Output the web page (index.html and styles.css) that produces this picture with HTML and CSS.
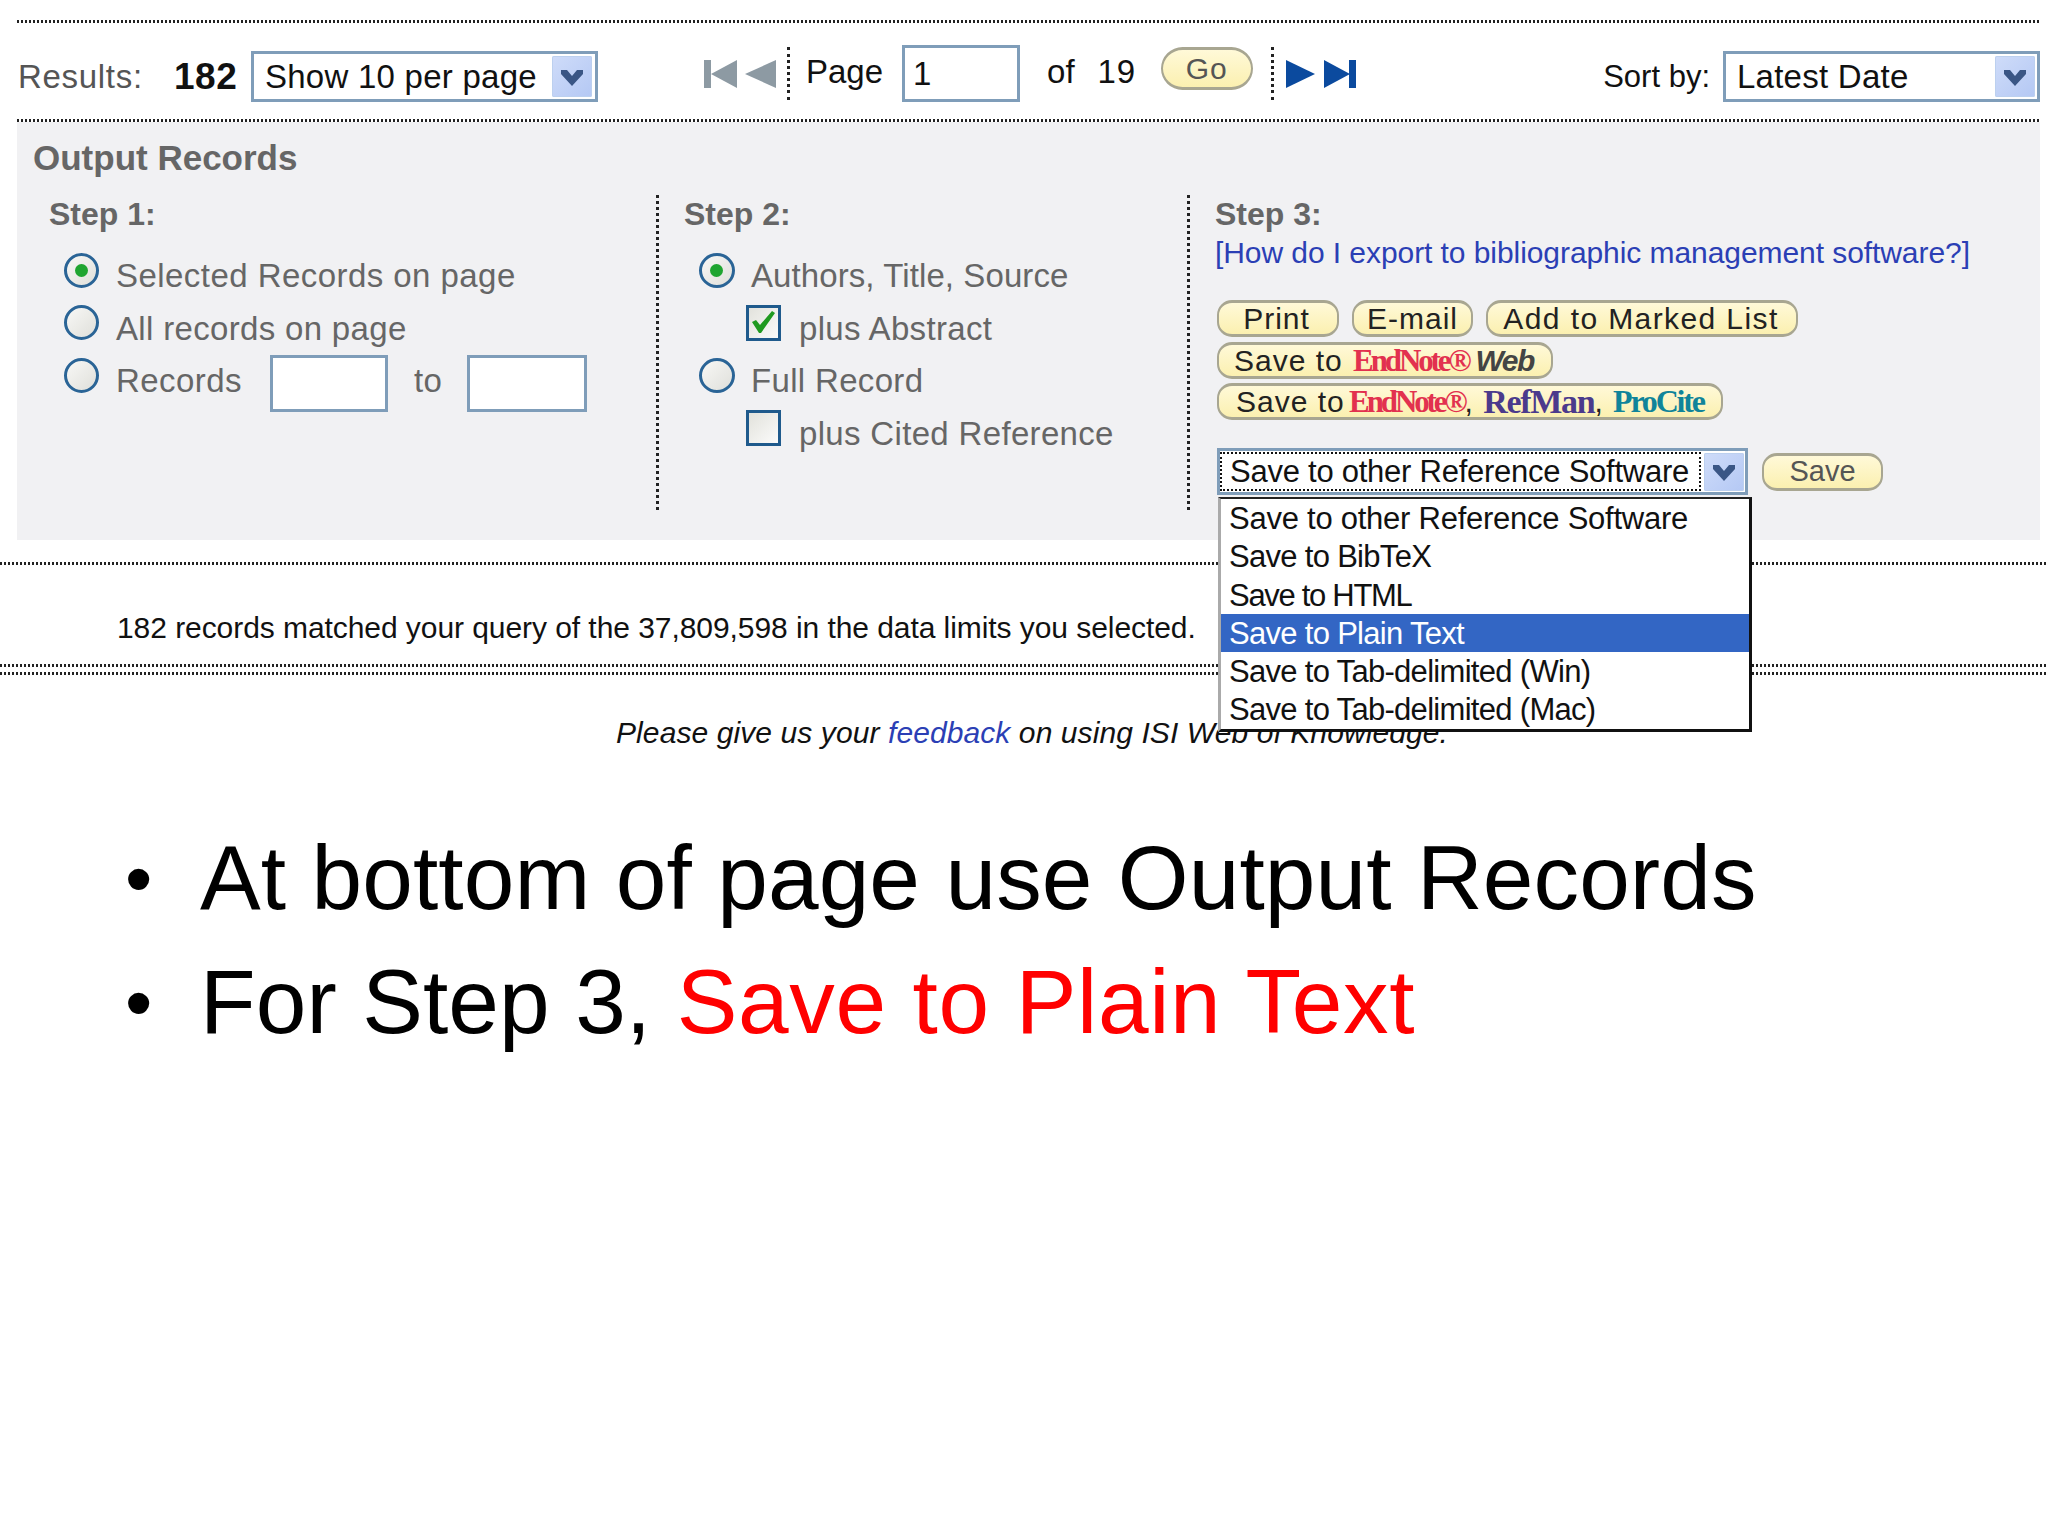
FILE: index.html
```html
<!DOCTYPE html>
<html>
<head>
  <title>Output Records</title>
  <link rel="stylesheet" href="styles.css">
</head>
<body>

  <div class="rule rule-top"></div>

  <div class="toolbar">
    <div class="results">
      <span class="results-label">Results:</span>
      <b class="results-count">182</b>
      <div class="select select-show">
        <span class="select-text">Show 10 per page</span>
        <span class="select-arrow"><svg viewBox="0 0 40 41"><path d="M9 14h6l5 6 5-6h6v4L20 30 9 18z" fill="#3a5685"/></svg></span>
      </div>
    </div>

    <div class="pager">
      <svg class="nav nav-first" viewBox="0 0 33 28"><path d="M0 0h7v28H0zM7 14L33 0v28z" fill="#8d9aa3"/></svg>
      <svg class="nav nav-prev" viewBox="0 0 31 28"><path d="M0 14L31 0v28z" fill="#8d9aa3"/></svg>
      <span class="vdots vdots-left"></span>
      <span class="pager-text page-word">Page</span>
      <input class="box box-page" type="text" value="1">
      <span class="pager-text of-word">of</span>
      <span class="pager-text of-count">19</span>
      <span class="pill pill-go">Go</span>
      <span class="vdots vdots-right"></span>
      <svg class="nav nav-next" viewBox="0 0 29 28"><path d="M0 0l29 14L0 28z" fill="#0b4a9e"/></svg>
      <svg class="nav nav-last" viewBox="0 0 32 28"><path d="M0 0l26 14L0 28zM25 0h7v28h-7z" fill="#0b4a9e"/></svg>
    </div>

    <div class="sort">
      <span class="sort-label">Sort by:</span>
      <div class="select select-sort">
        <span class="select-text">Latest Date</span>
        <span class="select-arrow"><svg viewBox="0 0 40 41"><path d="M9 14h6l5 6 5-6h6v4L20 30 9 18z" fill="#3a5685"/></svg></span>
      </div>
    </div>
  </div>

  <div class="rule rule-panel"></div>

  <div class="panel">
    <h2 class="panel-title">Output Records</h2>
    <div class="steps">

      <div class="step step-one">
        <h3 class="step-title">Step 1:</h3>
        <div class="opt opt-first"><span class="radio radio-on"></span><span class="opt-text opt-wide">Selected Records on page</span></div>
        <div class="opt"><span class="radio"></span><span class="opt-text">All records on page</span></div>
        <div class="opt">
          <span class="radio"></span><span class="opt-text opt-wide">Records</span>
          <input class="box box-from" type="text">
          <span class="opt-text to-word">to</span>
          <input class="box box-to" type="text">
        </div>
      </div>

      <div class="step step-two">
        <h3 class="step-title">Step 2:</h3>
        <div class="opt opt-first"><span class="radio radio-on"></span><span class="opt-text opt-narrow">Authors, Title, Source</span></div>
        <div class="opt opt-sub">
          <span class="check"><svg viewBox="0 0 29 29"><path d="M3 14l4-2 4 5L23 3l3 2-14 20h-2z" fill="#1f9a1f"/></svg></span>
          <span class="opt-text">plus Abstract</span>
        </div>
        <div class="opt"><span class="radio"></span><span class="opt-text">Full Record</span></div>
        <div class="opt opt-sub"><span class="check"></span><span class="opt-text">plus Cited Reference</span></div>
      </div>

      <div class="step step-three">
        <h3 class="step-title">Step 3:</h3>
        <a class="help-link">[How do I export to bibliographic management software?]</a>

        <div class="pill-row pill-row-first">
          <span class="pill pill-print">Print</span>
          <span class="pill pill-email">E-mail</span>
          <span class="pill pill-marked">Add to Marked List</span>
        </div>
        <div class="pill-row">
          <span class="pill pill-web">Save to <span class="logo-endnote logo-endnote-web">EndNote®</span><span class="logo-web">Web</span></span>
        </div>
        <div class="pill-row">
          <span class="pill pill-soft">Save to <span class="logo-endnote">EndNote®</span>, <span class="logo-refman">RefMan</span>, <span class="logo-procite">ProCite</span></span>
        </div>

        <div class="save-row">
          <div class="select select-save">
            <span class="select-text select-focus">Save to other Reference Software</span>
            <span class="select-arrow"><svg viewBox="0 0 40 38"><path d="M9 12h6l5 6 5-6h6v4L20 28 9 16z" fill="#3a5685"/></svg></span>
          </div>
          <span class="pill pill-save">Save</span>

          <ul class="dropdown">
            <li>Save to other Reference Software</li>
            <li class="tight">Save to BibTeX</li>
            <li class="tighter">Save to HTML</li>
            <li class="tight active">Save to Plain Text</li>
            <li class="tight">Save to Tab-delimited (Win)</li>
            <li class="tight">Save to Tab-delimited (Mac)</li>
          </ul>
        </div>
      </div>

    </div>
  </div>

  <div class="rule rule-full rule-status"></div>
  <p class="status">182 records matched your query of the 37,809,598 in the data limits you selected.</p>
  <div class="rule rule-full rule-double"></div>
  <div class="rule rule-full rule-double-low"></div>
  <p class="feedback">Please give us your <a class="feedback-link">feedback</a> on using ISI Web of Knowledge.</p>

  <ul class="bullets">
    <li><span class="dot">•</span><span>At bottom of page use Output Records</span></li>
    <li><span class="dot">•</span><span>For Step 3, <span class="red">Save to Plain Text</span></span></li>
  </ul>

</body>
</html>
```

FILE: styles.css
```css
body {
  margin: 0;
  background-color: #fff;
  color: #111;
  font-family: "Liberation Sans", Arial, sans-serif;
  font-size: 33px;
  line-height: 40px;
}

h2, h3, p, ul {
  margin: 0;
  padding: 0;
}

/* dotted lines */
.rule {
  height: 3px;
  background-image: repeating-linear-gradient(90deg, #222 0 2px, transparent 2px 4px);
}

.rule-top {
  margin: 20px 8px 0 17px;
}

.rule-panel {
  margin: 0 8px 0 17px;
}

.rule-status {
  margin-top: 22px;
}

.rule-double {
  margin-top: 18px;
}

.rule-double-low {
  margin-top: 5px;
}

.vdots {
  width: 0;
  height: 53px;
  border-left: 3px dotted #222;
}

/* top bar */
.toolbar {
  display: flex;
  height: 96px;
  margin: 0 8px 0 18px;
}

.results, .sort {
  display: flex;
  align-items: center;
  height: 51px;
  margin-top: 28px;
}

.results-label {
  width: 125px;
  color: #555;
  letter-spacing: 0.7px;
}

.results-count {
  width: 62px;
  margin-left: 31px;
  font-size: 37px;
  letter-spacing: 0.5px;
}

.select {
  display: flex;
  align-items: center;
  box-sizing: border-box;
  height: 51px;
  border: 3px solid #7f9db9;
  background-color: #fff;
}

.select-show {
  width: 347px;
  margin-left: 15px;
  padding: 0 3px 0 11px;
}

.select-sort {
  width: 317px;
  margin-left: 13px;
  padding: 0 2px 0 11px;
}

.select-text {
  flex: 1;
  letter-spacing: 0.25px;
}

.select-arrow {
  width: 40px;
  height: 41px;
  border-radius: 2px;
  background: linear-gradient(135deg, #cfdcf9, #b4c8f4);
  box-shadow: inset 0 0 0 1px #bcd0ef;
}

.select-arrow svg {
  display: block;
  width: 100%;
  height: 100%;
}

.pager {
  display: flex;
  align-items: center;
  height: 57px;
  margin: 22px 0 0 106px;
}

.nav {
  height: 28px;
}

.nav-first {
  width: 33px;
}

.nav-prev {
  width: 31px;
  margin-left: 8px;
}

.vdots-left {
  margin-left: 11px;
}

.pager-text {
  margin-top: -4px;
}

.page-word {
  margin-left: 16px;
}

.box {
  box-sizing: border-box;
  height: 57px;
  padding: 0 8px;
  border: 3px solid #7f9db9;
  border-radius: 0;
  background-color: #fff;
  color: #111;
  font-family: "Liberation Sans", Arial, sans-serif;
  font-size: 33px;
  outline: none;
}

.box-page {
  width: 118px;
  margin-left: 19px;
}

.of-word {
  margin-left: 27px;
}

.of-count {
  margin-left: 23px;
  letter-spacing: 0.7px;
}

.pill {
  display: inline-flex;
  align-items: center;
  justify-content: center;
  box-sizing: border-box;
  height: 37px;
  border: 2px solid #a8a691;
  border-top-width: 3px;
  border-bottom-width: 3px;
  border-radius: 15px;
  background: linear-gradient(180deg, #fff9d8, #fbf0b0);
  color: #222;
  font-size: 30px;
  line-height: 31px;
  letter-spacing: 1px;
  white-space: pre;
}

.pill-go {
  width: 92px;
  height: 43px;
  margin: -10px 0 0 25px;
  border-radius: 22px;
  color: #555;
}

.vdots-right {
  margin-left: 18px;
}

.nav-next {
  width: 29px;
  margin-left: 12px;
}

.nav-last {
  width: 32px;
  margin-left: 9px;
}

.sort {
  margin-left: auto;
}

.sort-label {
  font-size: 31px;
  letter-spacing: 0;
}

/* grey panel */
.panel {
  box-sizing: border-box;
  height: 418px;
  margin: 0 8px 0 17px;
  padding: 16px 0 0 16px;
  background-color: #f1f1f3;
  color: #666;
}

.panel-title {
  font-size: 35px;
  font-weight: bold;
  line-height: 40px;
}

.steps {
  display: flex;
  height: 315px;
  margin-top: 17px;
}

.step {
  box-sizing: border-box;
  height: 315px;
}

.step-one {
  width: 623px;
  padding-left: 16px;
}

.step-two {
  width: 531px;
  padding-left: 25px;
  border-left: 3px dotted #222;
}

.step-three {
  flex: 1;
  padding-left: 25px;
  border-left: 3px dotted #222;
}

.step-title {
  margin-top: -1px;
  font-size: 32px;
  font-weight: bold;
  line-height: 40px;
}

.opt {
  display: flex;
  align-items: center;
  height: 52.6px;
  margin-left: 15px;
}

.opt-first {
  margin-top: 16px;
}

.opt-text {
  letter-spacing: 0.33px;
  white-space: nowrap;
}

.opt-wide {
  letter-spacing: 0.45px;
}

.opt-narrow {
  letter-spacing: 0.09px;
}

.radio {
  position: relative;
  box-sizing: border-box;
  flex: none;
  width: 35px;
  height: 35px;
  margin: -12px 17px 0 0;
  border: 3px solid #2a6496;
  border-radius: 50%;
  background: linear-gradient(135deg, #f8f8f6, #dfdfda);
}

.radio-on::after {
  content: "";
  position: absolute;
  top: 8px;
  left: 8px;
  width: 13px;
  height: 13px;
  border-radius: 50%;
  background-color: #1fa52f;
}

.step-two .opt {
  margin-left: 15px;
}

.step-two .radio {
  width: 36px;
  margin-right: 16px;
}

.step-two .opt-sub {
  margin-left: 62px;
}

.check {
  box-sizing: border-box;
  flex: none;
  width: 35px;
  height: 36px;
  margin: -12px 18px 0 0;
  border: 3px solid #1f5a8c;
  background: linear-gradient(135deg, #e2e2dc, #fbfbfa);
}

.check svg {
  display: block;
}

.box-from {
  width: 118px;
  margin: 5px 0 0 28px;
}

.to-word {
  margin-left: 26px;
}

.box-to {
  width: 120px;
  margin: 5px 0 0 25px;
}

.help-link {
  display: block;
  margin-top: 2px;
  color: #2b3fb5;
  font-size: 30px;
  line-height: 34px;
  letter-spacing: -0.07px;
  white-space: nowrap;
}

.pill-row {
  display: flex;
  height: 37px;
  margin: 4.5px 0 0 2px;
}

.pill-row-first {
  margin-top: 30px;
}

.pill-print {
  width: 122px;
  padding-right: 3px;
}

.pill-email {
  width: 121px;
  margin-left: 13px;
}

.pill-marked {
  width: 312px;
  margin-left: 13px;
  padding-right: 2px;
  letter-spacing: 1.4px;
}

.pill-web {
  width: 336px;
  justify-content: flex-start;
  padding-left: 15px;
}

.pill-soft {
  width: 506px;
  justify-content: flex-start;
  padding-left: 17px;
}

.logo-endnote {
  margin-left: -5px;
  color: #e2314f;
  font-family: "Liberation Serif", serif;
  font-size: 31px;
  font-weight: bold;
  letter-spacing: -3.1px;
}

.logo-endnote-web {
  margin-left: 1px;
}

.logo-web {
  margin-left: 7px;
  color: #444;
  font-style: italic;
  font-weight: bold;
  letter-spacing: -1.5px;
}

.logo-refman {
  color: #4b3a8c;
  font-family: "Liberation Serif", serif;
  font-size: 34px;
  font-weight: bold;
  letter-spacing: -1.3px;
}

.logo-procite {
  color: #10849a;
  font-family: "Liberation Serif", serif;
  font-size: 32px;
  font-weight: bold;
  letter-spacing: -2.2px;
}

.save-row {
  position: relative;
  display: flex;
  align-items: center;
  height: 47px;
  margin: 28px 0 0 2px;
}

.select-save {
  width: 531px;
  height: 47px;
  padding: 0 1px 0 0;
}

.select-focus {
  box-sizing: border-box;
  height: 39px;
  margin-right: 3px;
  padding-left: 8px;
  border: 2px dotted #111;
  color: #111;
  font-size: 31px;
  line-height: 36px;
  letter-spacing: -0.25px;
}

.select-save .select-arrow {
  height: 38px;
}

.pill-save {
  width: 121px;
  height: 38px;
  margin-left: 14px;
  color: #555;
  font-size: 29px;
  letter-spacing: 0;
}

.dropdown {
  position: absolute;
  top: 49px;
  left: 1px;
  box-sizing: border-box;
  width: 534px;
  height: 235px;
  border-top: 2px solid #222;
  border-left: 3px solid #aaa;
  border-right: 3px solid #111;
  border-bottom: 3px solid #111;
  background-color: #fff;
  color: #111;
  font-size: 31px;
  letter-spacing: -0.25px;
  list-style: none;
}

.dropdown li {
  height: 38.3px;
  padding-left: 8px;
  line-height: 40px;
}

.dropdown .tight {
  letter-spacing: -0.7px;
}

.dropdown .tighter {
  letter-spacing: -1.3px;
}

.dropdown .active {
  background-color: #3366c4;
  color: #fff;
}

/* below the panel */
.rule-full {
  margin-left: 0;
  margin-right: 0;
}

.status {
  margin: 45px 0 0 117px;
  font-size: 30px;
  line-height: 36px;
  letter-spacing: -0.065px;
}

.feedback {
  margin: 40px 0 0 616px;
  font-size: 30px;
  font-style: italic;
  line-height: 36px;
  letter-spacing: 0.09px;
}

.feedback-link {
  color: #2b3fb5;
}

.bullets {
  margin-top: 65px;
  color: #000;
  font-size: 91px;
  line-height: 124px;
  letter-spacing: 0.1px;
  list-style: none;
}

.bullets li {
  display: flex;
  white-space: pre;
}

.dot {
  width: 75px;
  margin-left: 125px;
  font-size: 78px;
}

.red {
  color: #f00;
  letter-spacing: 0.65px;
}
```
